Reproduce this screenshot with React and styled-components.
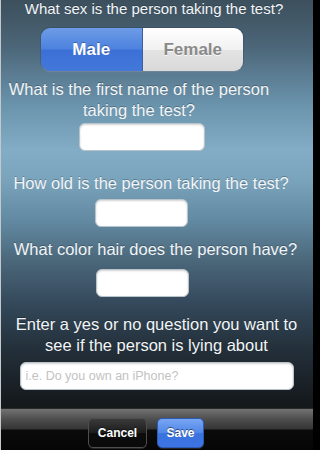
import React, { useState } from "react";
import styled, { createGlobalStyle } from "styled-components";

const GlobalStyle = createGlobalStyle`
  html, body {
    margin: 0;
    padding: 0;
    background: #000;
  }
  body {
    font-family: "Liberation Sans", Arial, sans-serif;
  }
`;

const Screen = styled.div`
  width: 313px;
  height: 450px;
  box-sizing: border-box;
  border-left: 1px solid #c4c8cb;
  display: flex;
  flex-direction: column;
  overflow: hidden;
  background: linear-gradient(
    180deg,
    #3c4f5d 0px,
    #4b6577 45px,
    #6a93ac 105px,
    #83adc6 150px,
    #7aa3bc 180px,
    #628aa2 220px,
    #4a6679 262px,
    #33485a 305px,
    #232f39 350px,
    #171c21 395px,
    #14181b 408px
  );
`;

const Form = styled.div`
  flex: 1;
  display: flex;
  flex-direction: column;
  align-items: center;
`;

const Question = styled.p`
  margin: ${(p) => p.$top || 0}px ${(p) => p.$shift || 0}px 0 0;
  width: ${(p) => p.$width || 296}px;
  font-size: ${(p) => p.$size || 16.5}px;
  line-height: ${(p) => p.$line || 21}px;
  color: #f2f5f7;
  text-align: center;
  text-shadow: 0 -1px 0 rgba(0, 0, 0, 0.25);
`;

const Segmented = styled.div`
  margin-top: 11px;
  margin-right: 30px;
  width: 202px;
  height: 43px;
  display: flex;
  border-radius: 9px;
  overflow: hidden;
  box-shadow: 0 1px 1px rgba(255, 255, 255, 0.25), 0 0 0 1px rgba(40, 60, 80, 0.35);
`;

const Segment = styled.button`
  flex: 1;
  border: none;
  padding: 0;
  font-family: inherit;
  font-size: 17px;
  font-weight: bold;
  cursor: pointer;
  color: ${(p) => (p.$active ? "#ffffff" : "#8a8a8a")};
  text-shadow: ${(p) =>
    p.$active ? "0 -1px 0 rgba(0,0,0,0.3)" : "0 1px 0 rgba(255,255,255,0.8)"};
  background: ${(p) =>
    p.$active
      ? "linear-gradient(180deg, #6d9ce6 0%, #4d82df 48%, #3c70d6 52%, #4378da 100%)"
      : "linear-gradient(180deg, #ffffff 0%, #f1f1f1 50%, #e3e3e3 52%, #d9d9d9 100%)"};
  border-right: ${(p) => (p.$active ? "1px solid #3a5f9c" : "none")};
`;

const Field = styled.input`
  margin-top: ${(p) => p.$top || 0}px;
  margin-right: ${(p) => p.$shift || 0}px;
  width: ${(p) => p.$width}px;
  height: 28px;
  box-sizing: border-box;
  border: 1px solid #b9c3ca;
  border-radius: 6px;
  background: #ffffff;
  box-shadow: inset 0 1px 2px rgba(0, 0, 0, 0.18);
  padding: 0 5px;
  font-family: inherit;
  font-size: 12.5px;
  color: #333;
  outline: none;

  &::placeholder {
    color: #c2c2c2;
  }
`;

const Toolbar = styled.div`
  height: 42px;
  display: flex;
  align-items: flex-start;
  gap: 10px;
  padding: 9px 0 0 87px;
  box-sizing: border-box;
  background: linear-gradient(
    180deg,
    #737373 0px,
    #4e4e4e 10px,
    #353535 20px,
    #0b0b0b 21px,
    #050505 42px
  );
  border-top: 1px solid #2a2a2a;
`;

const BarButton = styled.button`
  height: 30px;
  width: ${(p) => p.$width}px;
  padding: 0;
  border-radius: 5px;
  font-family: inherit;
  font-size: 12px;
  font-weight: bold;
  color: #ffffff;
  text-shadow: 0 -1px 0 rgba(0, 0, 0, 0.5);
  cursor: pointer;
  border: 1px solid ${(p) => (p.$primary ? "#2c5bb5" : "#4e4e4e")};
  background: ${(p) =>
    p.$primary
      ? "linear-gradient(180deg, #79a6f2 0%, #4f86e8 50%, #3a72e0 52%, #3c74e2 100%)"
      : "linear-gradient(180deg, #3a3a3a 0%, #1c1c1c 50%, #0c0c0c 52%, #0a0a0a 100%)"};
  box-shadow: 0 1px 0 rgba(255, 255, 255, 0.12);
`;

export default function App() {
  const [sex, setSex] = useState("male");

  return (
    <>
      <GlobalStyle />
      <Screen>
        <Form>
          <Question $size={15} $line={17} $width={300} $shift={6}>
            What sex is the person taking the test?
          </Question>
          <Segmented>
            <Segment $active={sex === "male"} onClick={() => setSex("male")}>
              Male
            </Segment>
            <Segment $active={sex === "female"} onClick={() => setSex("female")}>
              Female
            </Segment>
          </Segmented>

          <Question $top={8} $width={270} $shift={36}>
            What is the first name of the person taking the test?
          </Question>
          <Field $top={2} $width={126} $shift={30} />

          <Question $top={22} $shift={12}>
            How old is the person taking the test?
          </Question>
          <Field $top={5} $width={93} $shift={31} />

          <Question $top={12} $shift={3}>
            What color hair does the person have?
          </Question>
          <Field $top={9} $width={93} $shift={29} />

          <Question $top={17} $shift={1}>
            Enter a yes or no question you want to see if the person is lying
            about
          </Question>
          <Field $top={6} $width={274} $shift={1} placeholder="i.e. Do you own an iPhone?" />
        </Form>

        <Toolbar>
          <BarButton $width={59}>Cancel</BarButton>
          <BarButton $width={47} $primary>
            Save
          </BarButton>
        </Toolbar>
      </Screen>
    </>
  );
}
